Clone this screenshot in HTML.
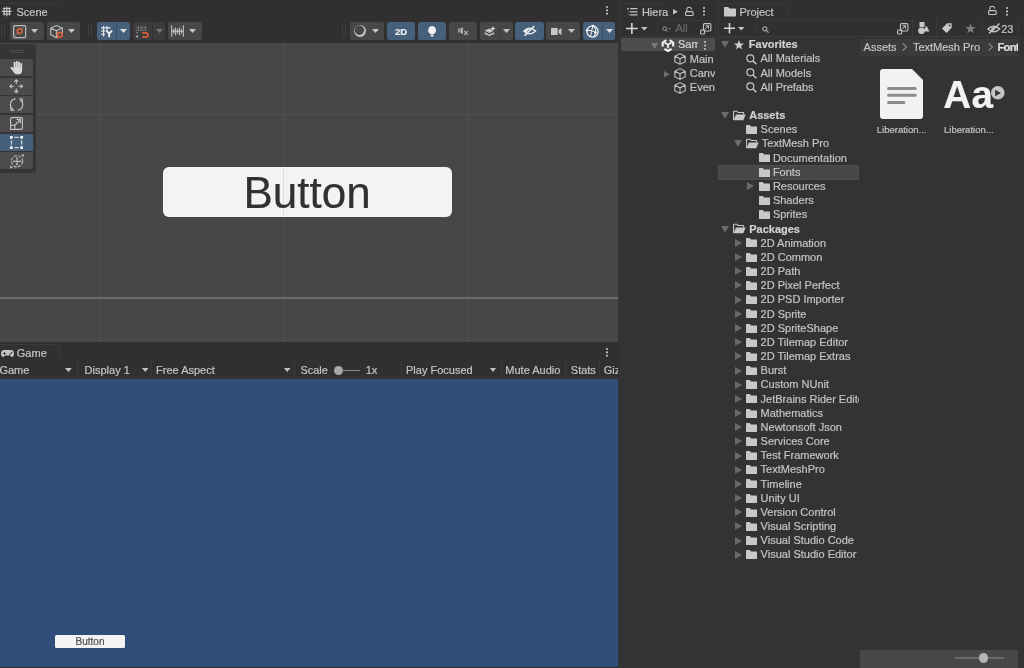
<!DOCTYPE html>
<html><head><meta charset="utf-8">
<style>
*{margin:0;padding:0;box-sizing:border-box}
html,body{width:1024px;height:668px;overflow:hidden;background:#303030;font-family:"Liberation Sans",sans-serif;font-size:11px;color:#c4c4c4}
.a{position:absolute}
.t{position:absolute;white-space:nowrap;-webkit-text-stroke:0.2px currentColor}
svg{position:absolute;overflow:visible}
</style></head><body><div id="root" style="position:absolute;left:0;top:0;width:1024px;height:668px;will-change:transform">

<div class="a" style="left:0px;top:3px;width:61.3px;height:1px;background:#3a3a3a;"></div>
<svg style="left:0px;top:4px;" width="14" height="14" viewBox="0 0 14 14"><path d="M4.2 3.2V11.6M6.8 2.5V12.2M9.4 3.2V11.6M2.8 4.5H10.8M1.9 7.3H11.7M2.8 10H10.8" stroke="#c8c8c8" stroke-width="1.15"/></svg>
<div class="t" style="left:16.5px;top:6.699999999999999px;font-size:11px;line-height:11px;color:#c4c4c4;">Scene</div>
<svg style="left:604.5px;top:5px;" width="4" height="10.8" viewBox="0 0 4 10.8"><circle cx="2" cy="2.0" r="1.05" fill="#c4c4c4"/><circle cx="2" cy="5.4" r="1.05" fill="#c4c4c4"/><circle cx="2" cy="8.8" r="1.05" fill="#c4c4c4"/></svg>
<div class="a" style="left:1.2px;top:24px;width:1px;height:14px;background:#3f3f3f;"></div>
<div class="a" style="left:3.9000000000000004px;top:24px;width:1px;height:14px;background:#3f3f3f;"></div>
<div class="a" style="left:10.2px;top:22.2px;width:33.5px;height:17.8px;background:#474747;border-radius:2.5px"></div>
<svg style="left:13.1px;top:24.8px;" width="13.5" height="13.5" viewBox="0 0 13.5 13.5"><rect x="0.65" y="0.65" width="12" height="12" rx="1.3" fill="none" stroke="#bcbcbc" stroke-width="1.25"/><path d="M2.3 10.8L11 2.2" stroke="#a0a0a0" stroke-width="1" stroke-dasharray="1.6 0.9"/><circle cx="6.6" cy="6.1" r="2.35" fill="#474747" stroke="#e0643a" stroke-width="1.5"/></svg>
<svg style="left:31.0px;top:29.3px;" width="7" height="4" viewBox="0 0 7 4"><path d="M0 0H7L3.5 4Z" fill="#c4c4c4"/></svg>
<div class="a" style="left:46.7px;top:22.2px;width:33.5px;height:17.8px;background:#474747;border-radius:2.5px"></div>
<svg style="left:49.8px;top:24.7px;" width="13.5" height="13.5" viewBox="0 0 13.5 13.5"><path d="M6.4 0.6L12.4 2.9V9.6L6.4 12.7L0.7 9.6V3.2Z M0.7 3.2L6.4 5.8L12.4 2.9 M6.4 5.8V12.7" fill="none" stroke="#bcbcbc" stroke-width="1.1" stroke-linejoin="round"/><circle cx="9.8" cy="9.8" r="2.4" fill="#474747" stroke="#e0643a" stroke-width="1.6"/></svg>
<svg style="left:67.8px;top:29.3px;" width="7" height="4" viewBox="0 0 7 4"><path d="M0 0H7L3.5 4Z" fill="#c4c4c4"/></svg>
<div class="a" style="left:88.4px;top:24px;width:1px;height:14px;background:#3f3f3f;"></div>
<div class="a" style="left:91.10000000000001px;top:24px;width:1px;height:14px;background:#3f3f3f;"></div>
<div class="a" style="left:97px;top:22.2px;width:32.6px;height:17.8px;background:#46607c;border-radius:2.5px"></div>
<div class="a" style="left:116.2px;top:22.2px;width:1.2px;height:17.8px;background:#3a4e66;"></div>
<svg style="left:100.9px;top:25.9px;" width="12" height="11.5" viewBox="0 0 12 11.5"><path d="M2.6 0V10.5M5.9 0V4.5M0 1.9H9.5M0 5H4.5M0 8.2H4" stroke="#e8e8e8" stroke-width="1.15"/><path d="M5.4 4.6L8.2 7.6L11 4.6M8.2 7.4V11.3" fill="none" stroke="#f4f4f4" stroke-width="1.8"/></svg>
<svg style="left:120.0px;top:29.3px;" width="7" height="4" viewBox="0 0 7 4"><path d="M0 0H7L3.5 4Z" fill="#e0e0e0"/></svg>
<div class="a" style="left:132.6px;top:22.2px;width:32.9px;height:17.8px;background:#3c3c3c;border-radius:2.5px"></div>
<div class="a" style="left:152.1px;top:22.2px;width:1px;height:17.8px;background:#333333;"></div>
<svg style="left:136.2px;top:25.9px;" width="13" height="11.5" viewBox="0 0 13 11.5"><path d="M2.6 0V4.5M6 0V4.5M9.2 0V4.5M0.2 1.8H11M0.2 4.4H11" stroke="#8e8e8e" stroke-width="0.9" stroke-dasharray="1.1 0.7"/><circle cx="1.2" cy="6.5" r="0.8" fill="#9a9a9a"/><circle cx="1.2" cy="10.5" r="0.9" fill="#d8d8d8"/><path d="M6.2 6.9H10A2 2 0 0 1 10 10.9H6.2" fill="none" stroke="#d4603a" stroke-width="1.7"/></svg>
<svg style="left:155.5px;top:29.3px;" width="7" height="4" viewBox="0 0 7 4"><path d="M0 0H7L3.5 4Z" fill="#7a7a7a"/></svg>
<div class="a" style="left:168.3px;top:22.2px;width:33.4px;height:17.8px;background:#474747;border-radius:2.5px"></div>
<svg style="left:170.7px;top:24.8px;" width="13" height="12" viewBox="0 0 13 12"><path d="M0.7 0.3V11.8M12.3 0.3V11.8M2.7 4V8.8M4.6 2.5V10.3M6.5 3.8V8.8M8.4 2.5V10.3M10.3 4V8.8M0.7 6.2H12.3" stroke="#c8c8c8" stroke-width="1.05"/></svg>
<svg style="left:189.3px;top:29.3px;" width="7" height="4" viewBox="0 0 7 4"><path d="M0 0H7L3.5 4Z" fill="#c4c4c4"/></svg>
<div class="a" style="left:342px;top:24px;width:1px;height:14px;background:#3f3f3f;"></div>
<div class="a" style="left:344.7px;top:24px;width:1px;height:14px;background:#3f3f3f;"></div>
<div class="a" style="left:350.3px;top:22.2px;width:33.5px;height:17.8px;background:#474747;border-radius:2.5px"></div>
<svg style="left:353.9px;top:25.3px;" width="12.5" height="12" viewBox="0 0 12.5 12"><path fill-rule="evenodd" d="M0.2 6A5.9 5.9 0 1 0 12 6A5.9 5.9 0 1 0 0.2 6Z M0.8 5.3A4.7 4.7 0 1 0 10.2 5.3A4.7 4.7 0 1 0 0.8 5.3Z" fill="#c4c4c4"/></svg>
<svg style="left:371.8px;top:29.3px;" width="7" height="4" viewBox="0 0 7 4"><path d="M0 0H7L3.5 4Z" fill="#c4c4c4"/></svg>
<div class="a" style="left:387.2px;top:22.2px;width:27.7px;height:17.8px;background:#46607c;border-radius:2.5px"></div>
<div class="t" style="left:387.2px;top:27.4px;width:27.7px;text-align:center;font-size:9.5px;line-height:10px;font-weight:bold;color:#eaeaea">2D</div>
<div class="a" style="left:418.2px;top:22.2px;width:27.8px;height:17.8px;background:#46607c;border-radius:2.5px"></div>
<svg style="left:427.9px;top:25.9px;" width="8.2" height="10.5" viewBox="0 0 8.2 10.5"><path d="M4.1 0A4.1 4.1 0 0 1 6.4 7.4L5.7 8.3H2.5L1.8 7.4A4.1 4.1 0 0 1 4.1 0Z" fill="#f2f2f2"/><rect x="2.6" y="8.8" width="3" height="1.6" rx="0.6" fill="#f2f2f2"/></svg>
<div class="a" style="left:449.4px;top:22.2px;width:27.7px;height:17.8px;background:#474747;border-radius:2.5px"></div>
<svg style="left:457.6px;top:27.2px;" width="11" height="8.5" viewBox="0 0 11 8.5"><path d="M0.2 1.6H1.5V5.6H0.2Z" fill="#bcbcbc"/><path d="M2.4 1.7L4.8 0V7.3L2.4 5.5Z" fill="#bcbcbc"/><path d="M6.2 3.8L9.8 7.9M9.8 3.8L6.2 7.9" stroke="#bcbcbc" stroke-width="1.05"/></svg>
<div class="a" style="left:480px;top:22.2px;width:32.8px;height:17.8px;background:#474747;border-radius:2.5px"></div>
<div class="a" style="left:499.2px;top:22.2px;width:1px;height:17.8px;background:#3c3c3c;"></div>
<svg style="left:483.6px;top:25.9px;" width="12" height="10" viewBox="0 0 12 10"><path d="M0.6 7L5.3 9.3L10.2 7" fill="none" stroke="#c8c8c8" stroke-width="1.4"/><path d="M0.6 4.6L5.3 6.9L9.6 4.8L5.3 2.4Z" fill="#c8c8c8"/><path d="M8.9 0L9.6 1.8L11.6 2.5L9.6 3.2L8.9 5L8.2 3.2L6.3 2.5L8.2 1.8Z" fill="#e4e4e4"/></svg>
<svg style="left:502.8px;top:29.3px;" width="7" height="4" viewBox="0 0 7 4"><path d="M0 0H7L3.5 4Z" fill="#c4c4c4"/></svg>
<div class="a" style="left:515.4px;top:22.2px;width:28.4px;height:17.8px;background:#46607c;border-radius:2.5px"></div>
<svg style="left:522.7px;top:25.9px;" width="13.5" height="10" viewBox="0 0 13.5 10"><path d="M0.7 5.1Q6.6 -0.5 12.6 5.1Q6.6 10.7 0.7 5.1Z" fill="none" stroke="#ececec" stroke-width="1.3"/><path d="M1.6 9.6L11.2 0.1" stroke="#ececec" stroke-width="1.6"/><path d="M0.7 5.1Q3.5 2.3 6.8 2.2L2.8 7Q1.5 6.2 0.7 5.1Z" fill="#ececec"/></svg>
<div class="a" style="left:546.3px;top:22.2px;width:33.5px;height:17.8px;background:#474747;border-radius:2.5px"></div>
<svg style="left:551px;top:27.8px;" width="11" height="7" viewBox="0 0 11 7"><rect x="0" y="0" width="6.6" height="7" fill="#c8c8c8"/><path d="M7.6 2L10.5 0V7L7.6 5Z" fill="#c8c8c8"/></svg>
<svg style="left:568.0px;top:29.3px;" width="7" height="4" viewBox="0 0 7 4"><path d="M0 0H7L3.5 4Z" fill="#c4c4c4"/></svg>
<div class="a" style="left:583.2px;top:22.2px;width:32.0px;height:17.8px;background:#46607c;border-radius:2.5px"></div>
<div class="a" style="left:602.3px;top:22.2px;width:1px;height:17.8px;background:#3a4e66;"></div>
<svg style="left:586px;top:25.1px;" width="13" height="13" viewBox="0 0 13 13"><circle cx="6.5" cy="6.5" r="5.6" fill="none" stroke="#f0f0f0" stroke-width="1.3"/><path d="M1 5.3Q5 4.8 9.5 7.4M7 0.8Q5.3 6 4.6 12M7 0.8Q10.8 4 9.6 7.4L8 12.3" fill="none" stroke="#f0f0f0" stroke-width="1"/><circle cx="7" cy="0.9" r="1.2" fill="#fff"/><circle cx="1" cy="5.3" r="1.2" fill="#fff"/><circle cx="9.5" cy="7.4" r="1.2" fill="#fff"/></svg>
<svg style="left:605.8px;top:29.3px;" width="7" height="4" viewBox="0 0 7 4"><path d="M0 0H7L3.5 4Z" fill="#e0e0e0"/></svg>
<div class="a" style="left:0;top:42.8px;width:618px;height:299.2px;background:#474747;overflow:hidden">
<div class="a" style="left:99.5px;top:0px;width:1px;height:300px;background:#515151;"></div>
<div class="a" style="left:283.5px;top:0px;width:1px;height:300px;background:#515151;"></div>
<div class="a" style="left:467.5px;top:0px;width:1px;height:300px;background:#515151;"></div>
<div class="a" style="left:0px;top:71.2px;width:618px;height:1px;background:#515151;"></div>
<div class="a" style="left:162.5px;top:124.2px;width:289px;height:50px;background:#f3f3f3;border-radius:6px"></div>
<div class="a" style="left:283.1px;top:124.2px;width:1px;height:50px;background:#dedede;"></div>
<div class="t" style="left:243.5px;top:128.5px;font-size:44px;line-height:44px;color:#313131">Button</div>
<div class="a" style="left:0px;top:254.3px;width:618px;height:1.8px;background:#6b6b6b;"></div>
<div class="a" style="left:0;top:1.4px;width:35.6px;height:128.8px;background:#353535;border-radius:0 4px 4px 0"></div>
<div class="a" style="left:9.9px;top:7.0px;width:14px;height:1px;background:#4a4a4a;"></div>
<div class="a" style="left:9.9px;top:9.300000000000004px;width:14px;height:1px;background:#4a4a4a;"></div>
<div class="a" style="left:0px;top:16.2px;width:33px;height:16.7px;background:#4b4b4b;border-radius:0 3px 0 0"></div>
<div class="a" style="left:0px;top:35.0px;width:33px;height:17.2px;background:#4b4b4b;"></div>
<div class="a" style="left:0px;top:53.4px;width:33px;height:17.2px;background:#4b4b4b;"></div>
<div class="a" style="left:0px;top:72.3px;width:33px;height:17.2px;background:#4b4b4b;"></div>
<div class="a" style="left:0px;top:91.0px;width:33px;height:17.0px;background:#46607c;"></div>
<div class="a" style="left:0px;top:109.4px;width:33px;height:17.2px;background:#4b4b4b;border-radius:0 0 3px 0"></div>
</div>
<svg style="left:9.85px;top:60.5px;" width="14" height="13.5" viewBox="0 0 14 13.5"><path d="M4.6 7V1.6M6.8 7V0.9M9 7V1.4M11.2 7.5V3" stroke="#d8d8d8" stroke-width="1.9" stroke-linecap="round"/><path d="M3.7 6.2H12.1V9.2Q12 13 8.8 13.2H6.7Q5.2 13.2 4.3 12L0.6 7.3Q0.1 6.4 0.9 5.9Q1.7 5.5 2.4 6.2L3.7 7.6Z" fill="#d8d8d8"/></svg>
<svg style="left:9.4px;top:79px;" width="14.5" height="14.5" viewBox="0 0 14.5 14.5"><path d="M7.25 1V5.2M7.25 9.3V13.5M1 7.25H5.2M9.3 7.25H13.5" stroke="#c4c4c4" stroke-width="1.1"/><path d="M5.3 2.9L7.25 0.9L9.2 2.9M5.3 11.6L7.25 13.6L9.2 11.6M2.9 5.3L0.9 7.25L2.9 9.2M11.6 5.3L13.6 7.25L11.6 9.2" fill="none" stroke="#c4c4c4" stroke-width="1.1"/></svg>
<svg style="left:9.85px;top:98.3px;" width="13.2" height="13.2" viewBox="0 0 13.2 13.2"><path d="M5.6 0.9A5.6 5.6 0 0 0 3.2 11.3M7.6 12.3A5.6 5.6 0 0 0 10 1.9" fill="none" stroke="#c4c4c4" stroke-width="1.15"/><path d="M0.6 9.3L1.1 12.4L4.3 12.2M12.6 3.9L12.1 0.8L8.9 1" fill="none" stroke="#c4c4c4" stroke-width="1.15"/></svg>
<svg style="left:10.1px;top:117.3px;" width="13" height="13" viewBox="0 0 13 13"><rect x="0.6" y="0.6" width="11.8" height="11.8" rx="1.4" fill="none" stroke="#c4c4c4" stroke-width="1.15"/><rect x="0.6" y="8.3" width="4.2" height="4.1" fill="#474747" stroke="#c4c4c4" stroke-width="1.15"/><path d="M5 8L10 3M6.6 2.5H10.4V6.3" fill="none" stroke="#c4c4c4" stroke-width="1.15"/></svg>
<svg style="left:10.1px;top:135.7px;" width="13" height="13" viewBox="0 0 13 13"><path d="M4.3 1.3H8.7M4.3 11.7H8.7M1.3 4.3V8.7M11.7 4.3V8.7" stroke="#e8e8e8" stroke-width="1"/><rect x="0" y="0" width="2.7" height="2.7" fill="#f2f2f2"/><rect x="10.3" y="0" width="2.7" height="2.7" fill="#f2f2f2"/><rect x="0" y="10.3" width="2.7" height="2.7" fill="#f2f2f2"/><rect x="10.3" y="10.3" width="2.7" height="2.7" fill="#f2f2f2"/></svg>
<svg style="left:9.6px;top:153.6px;" width="14.5" height="14.5" viewBox="0 0 14.5 14.5"><circle cx="7" cy="7.3" r="5.6" fill="none" stroke="#c4c4c4" stroke-width="1.05" stroke-dasharray="3.2 1.3"/><path d="M7 3.8V10.8M3.5 7.3H10.5" stroke="#c4c4c4" stroke-width="1"/><path d="M7 3L5.6 4.6H8.4ZM7 11.6L5.6 10H8.4ZM2.7 7.3L4.3 5.9V8.7ZM11.3 7.3L9.7 5.9V8.7Z" fill="#c4c4c4"/><path d="M14 0.2L11 0.8L13.4 3.2ZM0 14.4L3 13.8L0.6 11.4Z" fill="#c4c4c4"/></svg>
<div class="a" style="left:0;top:342px;width:618px;height:326px;overflow:hidden">
<div class="a" style="left:0px;top:1.7px;width:59px;height:1px;background:#3a3a3a;"></div>
<div class="a" style="left:58.5px;top:3px;width:1px;height:16px;background:#3a3a3a;"></div>
</div>
<svg style="left:1px;top:349.5px;" width="13" height="7" viewBox="0 0 13 7"><path d="M3 0H10Q13 0 13 3.5Q13 7 10.5 7L9 5.5H4L2.5 7Q0 7 0 3.5Q0 0 3 0Z" fill="#c4c4c4"/><path d="M2.2 3.5H4.8M3.5 2.2V4.8" stroke="#2b2b2b" stroke-width="0.9"/><circle cx="9" cy="4.3" r="0.8" fill="#2b2b2b"/><circle cx="10.5" cy="2.8" r="0.8" fill="#2b2b2b"/></svg>
<div class="t" style="left:16.8px;top:347.9px;font-size:11px;line-height:11px;color:#c4c4c4;">Game</div>
<svg style="left:604.5px;top:347px;" width="4" height="10.8" viewBox="0 0 4 10.8"><circle cx="2" cy="2.0" r="1.05" fill="#c4c4c4"/><circle cx="2" cy="5.4" r="1.05" fill="#c4c4c4"/><circle cx="2" cy="8.8" r="1.05" fill="#c4c4c4"/></svg>
<div class="t" style="left:-0.6px;top:364.6px;font-size:11px;line-height:11px;color:#c4c4c4;">Game</div>
<svg style="left:65.0px;top:368.0px;" width="6.8" height="4" viewBox="0 0 6.8 4"><path d="M0 0H6.8L3.4 4Z" fill="#c4c4c4"/></svg>
<div class="a" style="left:77.1px;top:361px;width:1px;height:16.5px;background:#3a3a3a;"></div>
<div class="t" style="left:84.6px;top:364.6px;font-size:11px;line-height:11px;color:#c4c4c4;">Display 1</div>
<svg style="left:141.6px;top:368.0px;" width="6.5" height="4" viewBox="0 0 6.5 4"><path d="M0 0H6.5L3.25 4Z" fill="#c4c4c4"/></svg>
<div class="a" style="left:150.9px;top:361px;width:1px;height:16.5px;background:#3a3a3a;"></div>
<div class="t" style="left:156.1px;top:364.6px;font-size:11px;line-height:11px;color:#c4c4c4;">Free Aspect</div>
<svg style="left:283.75px;top:368.0px;" width="6.5" height="4" viewBox="0 0 6.5 4"><path d="M0 0H6.5L3.25 4Z" fill="#c4c4c4"/></svg>
<div class="a" style="left:294.1px;top:361px;width:1px;height:16.5px;background:#3a3a3a;"></div>
<div class="t" style="left:300.4px;top:364.6px;font-size:11px;line-height:11px;color:#c4c4c4;">Scale</div>
<div class="a" style="left:338px;top:369.9px;width:22.2px;height:1.4px;background:#8a8a8a;"></div>
<div class="a" style="left:333.5px;top:366.1px;width:9px;height:9px;border-radius:50%;background:#a9a9a9"></div>
<div class="t" style="left:365.7px;top:364.6px;font-size:11px;line-height:11px;color:#c4c4c4;">1x</div>
<div class="a" style="left:401.0px;top:361px;width:1px;height:16.5px;background:#3a3a3a;"></div>
<div class="t" style="left:406px;top:364.6px;font-size:11px;line-height:11px;color:#c4c4c4;">Play Focused</div>
<svg style="left:489.7px;top:368.0px;" width="6" height="4" viewBox="0 0 6 4"><path d="M0 0H6L3.0 4Z" fill="#c4c4c4"/></svg>
<div class="a" style="left:500.5px;top:361px;width:1px;height:16.5px;background:#3a3a3a;"></div>
<div class="t" style="left:505.3px;top:364.6px;font-size:11px;line-height:11px;color:#c4c4c4;">Mute Audio</div>
<div class="a" style="left:564.9px;top:361px;width:1px;height:16.5px;background:#3a3a3a;"></div>
<div class="t" style="left:570.8px;top:364.6px;font-size:11px;line-height:11px;color:#c4c4c4;">Stats</div>
<div class="a" style="left:599.3px;top:361px;width:1px;height:16.5px;background:#3a3a3a;"></div>
<div class="a" style="left:603.7px;top:362px;width:14.3px;height:14px;overflow:hidden">
<div class="t" style="left:0px;top:2.6000000000000227px;font-size:11px;line-height:11px;color:#c4c4c4;">Gizmos</div>
</div>
<div class="a" style="left:0px;top:377.2px;width:618px;height:1px;background:#383838;"></div>
<div class="a" style="left:0px;top:378.5px;width:618px;height:288px;background:#314d79;"></div>
<div class="a" style="left:55.1px;top:635px;width:69.9px;height:12.5px;background:#f3f3f3;border-radius:1.5px"></div>
<div class="t" style="left:55.1px;top:636.6px;width:69.9px;text-align:center;font-size:10px;line-height:10px;color:#505050">Button</div>
<div class="a" style="left:620.3px;top:3px;width:47px;height:1px;background:#3a3a3a;"></div>
<div class="a" style="left:620.3px;top:3px;width:1px;height:33.6px;background:#3a3a3a;"></div>
<div class="a" style="left:620.3px;top:36px;width:95.4px;height:1px;background:#3a3a3a;"></div>
<div class="a" style="left:715px;top:20px;width:1px;height:16.5px;background:#3a3a3a;"></div>
<svg style="left:627.2px;top:7.6px;" width="10.5" height="8" viewBox="0 0 10.5 8"><path d="M3.2 0.7H10.5M3.2 3.8H10.5M3.2 6.9H10.5" stroke="#c4c4c4" stroke-width="1.2"/><circle cx="1" cy="0.7" r="0.9" fill="#c4c4c4"/><path d="M1.6 3.8H2.4M1.6 6.9H2.4" stroke="#c4c4c4" stroke-width="1"/></svg>
<div class="t" style="left:641.9px;top:6.699999999999999px;font-size:11px;line-height:11px;color:#c4c4c4;">Hiera</div>
<svg style="left:672.9px;top:9.1px;" width="5" height="6" viewBox="0 0 5 6"><path d="M0 0L4.8 2.8L0 5.6Z" fill="#c4c4c4"/></svg>
<svg style="left:685px;top:6.6px;" width="9" height="9" viewBox="0 0 9 9"><path d="M1.8 4.3V2.6A2.4 2.4 0 0 1 6.6 2.6" fill="none" stroke="#c4c4c4" stroke-width="1.1"/><rect x="0.55" y="4.6" width="7.6" height="3.9" rx="1" fill="none" stroke="#c4c4c4" stroke-width="1.1"/></svg>
<svg style="left:702.4px;top:5.6px;" width="4" height="10.8" viewBox="0 0 4 10.8"><circle cx="2" cy="2.0" r="1.05" fill="#c4c4c4"/><circle cx="2" cy="5.4" r="1.05" fill="#c4c4c4"/><circle cx="2" cy="8.8" r="1.05" fill="#c4c4c4"/></svg>
<svg style="left:625.6px;top:22.9px;" width="12" height="12" viewBox="0 0 12 12"><path d="M5.85 0V11.1M0 5.55H11.7" stroke="#d4d4d4" stroke-width="1.6"/></svg>
<svg style="left:640.9000000000001px;top:26.9px;" width="6.6" height="3.6" viewBox="0 0 6.6 3.6"><path d="M0 0H6.6L3.3 3.6Z" fill="#c4c4c4"/></svg>
<div class="a" style="left:657.1px;top:22px;width:1px;height:13px;background:#3a3a3a;"></div>
<div class="a" style="left:660px;top:19.8px;width:52.5px;height:1px;background:#3a3a3a;"></div>
<svg style="left:662.2px;top:25.9px;" width="9" height="6" viewBox="0 0 9 6"><circle cx="2.6" cy="2.6" r="1.9" fill="none" stroke="#9a9a9a" stroke-width="1"/><path d="M4 4L5.6 5.6M6.6 2.6H8.4" stroke="#9a9a9a" stroke-width="1"/></svg>
<div class="t" style="left:675.4px;top:23.0px;font-size:11px;line-height:11px;color:#6a6a6a;">All</div>
<svg style="left:699.8px;top:22.9px;" width="11.5" height="11.5" viewBox="0 0 11.5 11.5"><rect x="3.5" y="0.6" width="7.4" height="7.4" rx="1.2" fill="none" stroke="#c4c4c4" stroke-width="1.1"/><rect x="0.6" y="7" width="4" height="4" rx="0.8" fill="none" stroke="#c4c4c4" stroke-width="1.1"/><path d="M4.6 6.5L8.3 2.9M5.6 2.8H8.5V5.7" fill="none" stroke="#c4c4c4" stroke-width="1"/></svg>
<div class="a" style="left:618px;top:37px;width:100px;height:631px;background:#333333;"></div>
<div class="a" style="left:620.6px;top:38.1px;width:94.4px;height:13.2px;background:#4d4d4d;"></div>
<svg style="left:650.5px;top:42.7px;" width="7.2" height="6.1" viewBox="0 0 7.2 6.1"><path d="M0 0H7.2L3.6 6.1Z" fill="#7a7a7a"/></svg>
<svg style="left:660px;top:38px;" width="16" height="15" viewBox="0 0 16 15"><path d="M2.7 8.4V4.5L6.3 2.1M13.2 8.4V4.5L9.6 2.1M4.4 10.8L8 13L11.6 10.8" fill="none" stroke="#f2f2f2" stroke-width="2.1" stroke-linejoin="round"/><path d="M4.5 4.5L8 6.8L11.5 4.5M8 6.6V10.3" fill="none" stroke="#f2f2f2" stroke-width="1.7"/></svg>
<div class="a" style="left:678px;top:38px;width:19.5px;height:14px;overflow:hidden">
<div class="t" style="left:0px;top:1.2000000000000028px;font-size:11px;line-height:11px;color:#d6d6d6;">SampleScene</div>
</div>
<svg style="left:702.9px;top:39.6px;" width="4" height="11.0" viewBox="0 0 4 11.0"><circle cx="2" cy="2.0" r="1.05" fill="#c4c4c4"/><circle cx="2" cy="5.5" r="1.05" fill="#c4c4c4"/><circle cx="2" cy="9.0" r="1.05" fill="#c4c4c4"/></svg>
<svg style="left:674px;top:53.47px;" width="12" height="12" viewBox="0 0 12 12"><path d="M6 0.6L11.2 3.2V8.8L6 11.4L0.8 8.8V3.2Z M0.8 3.2L6 5.8L11.2 3.2 M6 5.8V11.4" fill="none" stroke="#c4c4c4" stroke-width="1.05" stroke-linejoin="round"/></svg>
<div class="a" style="left:689.8px;top:51.67px;width:25.5px;height:14px;overflow:hidden">
<div class="t" style="left:0px;top:2.0px;font-size:11px;line-height:11px;color:#c4c4c4;">Main Camera</div>
</div>
<svg style="left:674px;top:67.64px;" width="12" height="12" viewBox="0 0 12 12"><path d="M6 0.6L11.2 3.2V8.8L6 11.4L0.8 8.8V3.2Z M0.8 3.2L6 5.8L11.2 3.2 M6 5.8V11.4" fill="none" stroke="#c4c4c4" stroke-width="1.05" stroke-linejoin="round"/></svg>
<div class="a" style="left:689.8px;top:65.84px;width:25.5px;height:14px;overflow:hidden">
<div class="t" style="left:0px;top:2.0px;font-size:11px;line-height:11px;color:#c4c4c4;">Canvas</div>
</div>
<svg style="left:674px;top:81.80999999999999px;" width="12" height="12" viewBox="0 0 12 12"><path d="M6 0.6L11.2 3.2V8.8L6 11.4L0.8 8.8V3.2Z M0.8 3.2L6 5.8L11.2 3.2 M6 5.8V11.4" fill="none" stroke="#c4c4c4" stroke-width="1.05" stroke-linejoin="round"/></svg>
<div class="a" style="left:689.8px;top:80.00999999999999px;width:25.5px;height:14px;overflow:hidden">
<div class="t" style="left:0px;top:2.0px;font-size:11px;line-height:11px;color:#c4c4c4;">EventSystem</div>
</div>
<svg style="left:663.5px;top:70.8px;" width="6.5" height="7" viewBox="0 0 6.5 7"><path d="M0 0L5.8 3.2L0 6.4Z" fill="#6e6e6e"/></svg>
<div class="a" style="left:718.3px;top:3px;width:70px;height:1px;background:#3a3a3a;"></div>
<div class="a" style="left:718.3px;top:3px;width:1px;height:33.6px;background:#3a3a3a;"></div>
<div class="a" style="left:788px;top:5px;width:1px;height:13.5px;background:#3a3a3a;"></div>
<div class="a" style="left:718.3px;top:36px;width:300px;height:1px;background:#3a3a3a;"></div>
<svg style="left:724px;top:7.3px;" width="12" height="9.5" viewBox="0 0 12 9.5"><path d="M0 0.8Q0 0 0.8 0H4.2L5.5 1.5H11.2Q12 1.5 12 2.3V8.7Q12 9.5 11.2 9.5H0.8Q0 9.5 0 8.7Z" fill="#c8c8c8"/></svg>
<div class="t" style="left:739.4px;top:6.6px;font-size:11px;line-height:11px;color:#c4c4c4;">Project</div>
<svg style="left:987.9px;top:6.3px;" width="9" height="9" viewBox="0 0 9 9"><path d="M1.8 4.3V2.6A2.4 2.4 0 0 1 6.6 2.6" fill="none" stroke="#c4c4c4" stroke-width="1.1"/><rect x="0.55" y="4.6" width="7.6" height="3.9" rx="1" fill="none" stroke="#c4c4c4" stroke-width="1.1"/></svg>
<svg style="left:1005px;top:5.6px;" width="4" height="10.8" viewBox="0 0 4 10.8"><circle cx="2" cy="2.0" r="1.05" fill="#c4c4c4"/><circle cx="2" cy="5.4" r="1.05" fill="#c4c4c4"/><circle cx="2" cy="8.8" r="1.05" fill="#c4c4c4"/></svg>
<svg style="left:723.75px;top:23.4px;" width="11" height="11" viewBox="0 0 11 11"><path d="M5.5 0V10.4M0 5.2H11" stroke="#d4d4d4" stroke-width="1.6"/></svg>
<svg style="left:738.2px;top:26.8px;" width="6.6" height="3.6" viewBox="0 0 6.6 3.6"><path d="M0 0H6.6L3.3 3.6Z" fill="#c4c4c4"/></svg>
<div class="a" style="left:756.1px;top:22px;width:1px;height:13px;background:#3a3a3a;"></div>
<div class="a" style="left:759.8px;top:19.7px;width:152.5px;height:1px;background:#3a3a3a;"></div>
<svg style="left:761.5px;top:25.8px;" width="8" height="7" viewBox="0 0 8 7"><circle cx="2.8" cy="2.8" r="2.1" fill="none" stroke="#a8a8a8" stroke-width="1.1"/><path d="M4.4 4.4L6.6 6.6" stroke="#a8a8a8" stroke-width="1.3"/></svg>
<svg style="left:896.7px;top:22.6px;" width="11.5" height="11.5" viewBox="0 0 11.5 11.5"><rect x="3.5" y="0.6" width="7.4" height="7.4" rx="1.2" fill="none" stroke="#c4c4c4" stroke-width="1.1"/><rect x="0.6" y="7" width="4" height="4" rx="0.8" fill="none" stroke="#c4c4c4" stroke-width="1.1"/><path d="M4.6 6.5L8.3 2.9M5.6 2.8H8.5V5.7" fill="none" stroke="#c4c4c4" stroke-width="1"/></svg>
<div class="a" style="left:912.4px;top:20.2px;width:1px;height:16px;background:#3a3a3a;"></div>
<svg style="left:918px;top:21.8px;" width="12" height="12" viewBox="0 0 12 12"><rect x="1.5" y="0" width="5" height="5" fill="#c8c8c8"/><circle cx="3.5" cy="8.7" r="3.3" fill="#c8c8c8"/><path d="M8.2 3.5L11.6 9.5H5.5Z" fill="#c8c8c8"/></svg>
<div class="a" style="left:936.2px;top:20.2px;width:1px;height:16px;background:#3a3a3a;"></div>
<svg style="left:941.8px;top:23px;" width="10" height="10" viewBox="0 0 10 10"><path d="M5.2 0.3H9.7V4.8L4.5 10L0 5.5Z" fill="#c8c8c8"/><circle cx="7.6" cy="2.4" r="0.9" fill="#282828"/></svg>
<svg style="left:964.7px;top:22.6px;" width="11" height="11" viewBox="0 0 11 11"><path d="M5.5 0.3L6.9 4H10.8L7.6 6.4L8.8 10.3L5.5 7.9L2.2 10.3L3.4 6.4L0.2 4H4.1Z" fill="#7b7b7b"/></svg>
<div class="a" style="left:982.0px;top:20.2px;width:1px;height:16px;background:#3a3a3a;"></div>
<svg style="left:986.8px;top:22.8px;" width="14" height="11" viewBox="0 0 14 11"><path d="M0.8 6Q6.8 0.5 12.8 6Q6.8 11.5 0.8 6Z" fill="none" stroke="#c8c8c8" stroke-width="1.2"/><path d="M2 10.5L12.5 0.5" stroke="#c8c8c8" stroke-width="1.4"/><path d="M3.8 6Q6.8 3 9.5 4.3L5 8.2Q4 7 3.8 6Z" fill="#c8c8c8"/></svg>
<div class="t" style="left:1001.2px;top:23.799999999999997px;font-size:11px;line-height:11px;color:#c4c4c4;">23</div>
<div class="a" style="left:1017.5px;top:20.2px;width:1px;height:16px;background:#3a3a3a;"></div>
<div class="a" style="left:718px;top:37px;width:306px;height:631px;background:#333333;"></div>
<div class="a" style="left:1018px;top:37px;width:6px;height:631px;background:#333333;"></div>
<div class="a" style="left:717.9px;top:165.1px;width:140.7px;height:14.6px;background:#474747;border:1px solid #4f4f4f"></div>
<div class="a" style="left:718px;top:37px;width:140.5px;height:620px;overflow:hidden">
<svg style="left:3.0px;top:4.299999999999997px;" width="8" height="7" viewBox="0 0 8 7"><path d="M0 0H8L4 7Z" fill="#6a6a6a"/></svg>
<svg style="left:16px;top:2.6999999999999957px;" width="10" height="10" viewBox="0 0 10 10"><path d="M5 0L6.25 3.6H10L7 5.9L8.1 9.6L5 7.3L1.9 9.6L3 5.9L0 3.6H3.75Z" fill="#d0d0d0"/></svg>
<div class="t" style="left:30.8px;top:2.3000000000000007px;font-size:11px;line-height:11px;color:#d2d2d2;font-weight:bold;">Favorites</div>
<svg style="left:27.600000000000023px;top:16.869999999999997px;" width="11.5" height="11.5" viewBox="0 0 11.5 11.5"><circle cx="4.3" cy="4.3" r="3.5" fill="none" stroke="#c4c4c4" stroke-width="1.2"/><path d="M6.8 6.8L10.3 10.3" stroke="#c4c4c4" stroke-width="1.6"/></svg>
<div class="t" style="left:42.4px;top:16.47px;font-size:11px;line-height:11px;color:#c4c4c4;">All Materials</div>
<svg style="left:27.600000000000023px;top:31.040000000000006px;" width="11.5" height="11.5" viewBox="0 0 11.5 11.5"><circle cx="4.3" cy="4.3" r="3.5" fill="none" stroke="#c4c4c4" stroke-width="1.2"/><path d="M6.8 6.8L10.3 10.3" stroke="#c4c4c4" stroke-width="1.6"/></svg>
<div class="t" style="left:42.4px;top:30.64px;font-size:11px;line-height:11px;color:#c4c4c4;">All Models</div>
<svg style="left:27.600000000000023px;top:45.21000000000001px;" width="11.5" height="11.5" viewBox="0 0 11.5 11.5"><circle cx="4.3" cy="4.3" r="3.5" fill="none" stroke="#c4c4c4" stroke-width="1.2"/><path d="M6.8 6.8L10.3 10.3" stroke="#c4c4c4" stroke-width="1.6"/></svg>
<div class="t" style="left:42.4px;top:44.81px;font-size:11px;line-height:11px;color:#c4c4c4;">All Prefabs</div>
<svg style="left:3.0px;top:75.14999999999999px;" width="8" height="7" viewBox="0 0 8 7"><path d="M0 0H8L4 7Z" fill="#6a6a6a"/></svg>
<svg style="left:15.0px;top:73.74999999999999px;" width="13" height="9.5" viewBox="0 0 13 9.5"><path d="M0.6 9V0.6Q0.6 0.2 1 0.2H4L5.1 1.5H10.2Q10.6 1.5 10.6 1.9V3.4" fill="none" stroke="#c8c8c8" stroke-width="1.1"/><path d="M0.6 9.3L3 3.6H12.7L10.3 9.3Z" fill="#c8c8c8"/></svg>
<div class="t" style="left:31.2px;top:73.15px;font-size:11px;line-height:11px;color:#d2d2d2;font-weight:bold;">Assets</div>
<svg style="left:28.100000000000023px;top:88.11999999999999px;" width="11" height="9" viewBox="0 0 11 9"><path d="M0 0.6Q0 0 0.6 0H3.8L5 1.4H10.4Q11 1.4 11 2V8.4Q11 9 10.4 9H0.6Q0 9 0 8.4Z" fill="#c8c8c8"/></svg>
<div class="t" style="left:42.6px;top:87.32px;font-size:11px;line-height:11px;color:#c4c4c4;">Scenes</div>
<svg style="left:15.600000000000023px;top:103.49000000000001px;" width="8" height="7" viewBox="0 0 8 7"><path d="M0 0H8L4 7Z" fill="#6a6a6a"/></svg>
<svg style="left:27.600000000000023px;top:102.09px;" width="13" height="9.5" viewBox="0 0 13 9.5"><path d="M0.6 9V0.6Q0.6 0.2 1 0.2H4L5.1 1.5H10.2Q10.6 1.5 10.6 1.9V3.4" fill="none" stroke="#c8c8c8" stroke-width="1.1"/><path d="M0.6 9.3L3 3.6H12.7L10.3 9.3Z" fill="#c8c8c8"/></svg>
<div class="t" style="left:43.8px;top:101.49px;font-size:11px;line-height:11px;color:#c4c4c4;">TextMesh Pro</div>
<svg style="left:40.700000000000045px;top:116.46000000000001px;" width="11" height="9" viewBox="0 0 11 9"><path d="M0 0.6Q0 0 0.6 0H3.8L5 1.4H10.4Q11 1.4 11 2V8.4Q11 9 10.4 9H0.6Q0 9 0 8.4Z" fill="#c8c8c8"/></svg>
<div class="t" style="left:54.9px;top:115.66px;font-size:11px;line-height:11px;color:#c4c4c4;">Documentation</div>
<svg style="left:40.700000000000045px;top:130.63px;" width="11" height="9" viewBox="0 0 11 9"><path d="M0 0.6Q0 0 0.6 0H3.8L5 1.4H10.4Q11 1.4 11 2V8.4Q11 9 10.4 9H0.6Q0 9 0 8.4Z" fill="#c8c8c8"/></svg>
<div class="t" style="left:54.9px;top:129.83px;font-size:11px;line-height:11px;color:#c4c4c4;">Fonts</div>
<svg style="left:29.200000000000045px;top:145.3px;" width="7" height="8" viewBox="0 0 7 8"><path d="M0 0L7 4L0 8Z" fill="#6a6a6a"/></svg>
<svg style="left:40.700000000000045px;top:144.8px;" width="11" height="9" viewBox="0 0 11 9"><path d="M0 0.6Q0 0 0.6 0H3.8L5 1.4H10.4Q11 1.4 11 2V8.4Q11 9 10.4 9H0.6Q0 9 0 8.4Z" fill="#c8c8c8"/></svg>
<div class="t" style="left:54.9px;top:144.0px;font-size:11px;line-height:11px;color:#c4c4c4;">Resources</div>
<svg style="left:40.700000000000045px;top:158.97000000000003px;" width="11" height="9" viewBox="0 0 11 9"><path d="M0 0.6Q0 0 0.6 0H3.8L5 1.4H10.4Q11 1.4 11 2V8.4Q11 9 10.4 9H0.6Q0 9 0 8.4Z" fill="#c8c8c8"/></svg>
<div class="t" style="left:54.9px;top:158.17px;font-size:11px;line-height:11px;color:#c4c4c4;">Shaders</div>
<svg style="left:40.700000000000045px;top:173.14px;" width="11" height="9" viewBox="0 0 11 9"><path d="M0 0.6Q0 0 0.6 0H3.8L5 1.4H10.4Q11 1.4 11 2V8.4Q11 9 10.4 9H0.6Q0 9 0 8.4Z" fill="#c8c8c8"/></svg>
<div class="t" style="left:54.9px;top:172.34px;font-size:11px;line-height:11px;color:#c4c4c4;">Sprites</div>
<svg style="left:3.0px;top:188.51px;" width="8" height="7" viewBox="0 0 8 7"><path d="M0 0H8L4 7Z" fill="#6a6a6a"/></svg>
<svg style="left:15.0px;top:187.10999999999999px;" width="13" height="9.5" viewBox="0 0 13 9.5"><path d="M0.6 9V0.6Q0.6 0.2 1 0.2H4L5.1 1.5H10.2Q10.6 1.5 10.6 1.9V3.4" fill="none" stroke="#c8c8c8" stroke-width="1.1"/><path d="M0.6 9.3L3 3.6H12.7L10.3 9.3Z" fill="#c8c8c8"/></svg>
<div class="t" style="left:31.2px;top:186.51px;font-size:11px;line-height:11px;color:#d2d2d2;font-weight:bold;">Packages</div>
<svg style="left:16.600000000000023px;top:201.98000000000002px;" width="7" height="8" viewBox="0 0 7 8"><path d="M0 0L7 4L0 8Z" fill="#6a6a6a"/></svg>
<svg style="left:28.100000000000023px;top:201.48000000000002px;" width="11" height="9" viewBox="0 0 11 9"><path d="M0 0.6Q0 0 0.6 0H3.8L5 1.4H10.4Q11 1.4 11 2V8.4Q11 9 10.4 9H0.6Q0 9 0 8.4Z" fill="#c8c8c8"/></svg>
<div class="t" style="left:42.6px;top:200.68px;font-size:11px;line-height:11px;color:#c4c4c4;">2D Animation</div>
<svg style="left:16.600000000000023px;top:216.15000000000003px;" width="7" height="8" viewBox="0 0 7 8"><path d="M0 0L7 4L0 8Z" fill="#6a6a6a"/></svg>
<svg style="left:28.100000000000023px;top:215.65000000000003px;" width="11" height="9" viewBox="0 0 11 9"><path d="M0 0.6Q0 0 0.6 0H3.8L5 1.4H10.4Q11 1.4 11 2V8.4Q11 9 10.4 9H0.6Q0 9 0 8.4Z" fill="#c8c8c8"/></svg>
<div class="t" style="left:42.6px;top:214.85px;font-size:11px;line-height:11px;color:#c4c4c4;">2D Common</div>
<svg style="left:16.600000000000023px;top:230.32px;" width="7" height="8" viewBox="0 0 7 8"><path d="M0 0L7 4L0 8Z" fill="#6a6a6a"/></svg>
<svg style="left:28.100000000000023px;top:229.82px;" width="11" height="9" viewBox="0 0 11 9"><path d="M0 0.6Q0 0 0.6 0H3.8L5 1.4H10.4Q11 1.4 11 2V8.4Q11 9 10.4 9H0.6Q0 9 0 8.4Z" fill="#c8c8c8"/></svg>
<div class="t" style="left:42.6px;top:229.02px;font-size:11px;line-height:11px;color:#c4c4c4;">2D Path</div>
<svg style="left:16.600000000000023px;top:244.49px;" width="7" height="8" viewBox="0 0 7 8"><path d="M0 0L7 4L0 8Z" fill="#6a6a6a"/></svg>
<svg style="left:28.100000000000023px;top:243.99px;" width="11" height="9" viewBox="0 0 11 9"><path d="M0 0.6Q0 0 0.6 0H3.8L5 1.4H10.4Q11 1.4 11 2V8.4Q11 9 10.4 9H0.6Q0 9 0 8.4Z" fill="#c8c8c8"/></svg>
<div class="t" style="left:42.6px;top:243.19px;font-size:11px;line-height:11px;color:#c4c4c4;">2D Pixel Perfect</div>
<svg style="left:16.600000000000023px;top:258.66px;" width="7" height="8" viewBox="0 0 7 8"><path d="M0 0L7 4L0 8Z" fill="#6a6a6a"/></svg>
<svg style="left:28.100000000000023px;top:258.16px;" width="11" height="9" viewBox="0 0 11 9"><path d="M0 0.6Q0 0 0.6 0H3.8L5 1.4H10.4Q11 1.4 11 2V8.4Q11 9 10.4 9H0.6Q0 9 0 8.4Z" fill="#c8c8c8"/></svg>
<div class="t" style="left:42.6px;top:257.36px;font-size:11px;line-height:11px;color:#c4c4c4;">2D PSD Importer</div>
<svg style="left:16.600000000000023px;top:272.83000000000004px;" width="7" height="8" viewBox="0 0 7 8"><path d="M0 0L7 4L0 8Z" fill="#6a6a6a"/></svg>
<svg style="left:28.100000000000023px;top:272.33000000000004px;" width="11" height="9" viewBox="0 0 11 9"><path d="M0 0.6Q0 0 0.6 0H3.8L5 1.4H10.4Q11 1.4 11 2V8.4Q11 9 10.4 9H0.6Q0 9 0 8.4Z" fill="#c8c8c8"/></svg>
<div class="t" style="left:42.6px;top:271.53px;font-size:11px;line-height:11px;color:#c4c4c4;">2D Sprite</div>
<svg style="left:16.600000000000023px;top:287.0px;" width="7" height="8" viewBox="0 0 7 8"><path d="M0 0L7 4L0 8Z" fill="#6a6a6a"/></svg>
<svg style="left:28.100000000000023px;top:286.5px;" width="11" height="9" viewBox="0 0 11 9"><path d="M0 0.6Q0 0 0.6 0H3.8L5 1.4H10.4Q11 1.4 11 2V8.4Q11 9 10.4 9H0.6Q0 9 0 8.4Z" fill="#c8c8c8"/></svg>
<div class="t" style="left:42.6px;top:285.7px;font-size:11px;line-height:11px;color:#c4c4c4;">2D SpriteShape</div>
<svg style="left:16.600000000000023px;top:301.17px;" width="7" height="8" viewBox="0 0 7 8"><path d="M0 0L7 4L0 8Z" fill="#6a6a6a"/></svg>
<svg style="left:28.100000000000023px;top:300.67px;" width="11" height="9" viewBox="0 0 11 9"><path d="M0 0.6Q0 0 0.6 0H3.8L5 1.4H10.4Q11 1.4 11 2V8.4Q11 9 10.4 9H0.6Q0 9 0 8.4Z" fill="#c8c8c8"/></svg>
<div class="t" style="left:42.6px;top:299.87px;font-size:11px;line-height:11px;color:#c4c4c4;">2D Tilemap Editor</div>
<svg style="left:16.600000000000023px;top:315.34000000000003px;" width="7" height="8" viewBox="0 0 7 8"><path d="M0 0L7 4L0 8Z" fill="#6a6a6a"/></svg>
<svg style="left:28.100000000000023px;top:314.84000000000003px;" width="11" height="9" viewBox="0 0 11 9"><path d="M0 0.6Q0 0 0.6 0H3.8L5 1.4H10.4Q11 1.4 11 2V8.4Q11 9 10.4 9H0.6Q0 9 0 8.4Z" fill="#c8c8c8"/></svg>
<div class="t" style="left:42.6px;top:314.04px;font-size:11px;line-height:11px;color:#c4c4c4;">2D Tilemap Extras</div>
<svg style="left:16.600000000000023px;top:329.51000000000005px;" width="7" height="8" viewBox="0 0 7 8"><path d="M0 0L7 4L0 8Z" fill="#6a6a6a"/></svg>
<svg style="left:28.100000000000023px;top:329.01000000000005px;" width="11" height="9" viewBox="0 0 11 9"><path d="M0 0.6Q0 0 0.6 0H3.8L5 1.4H10.4Q11 1.4 11 2V8.4Q11 9 10.4 9H0.6Q0 9 0 8.4Z" fill="#c8c8c8"/></svg>
<div class="t" style="left:42.6px;top:328.21px;font-size:11px;line-height:11px;color:#c4c4c4;">Burst</div>
<svg style="left:16.600000000000023px;top:343.68px;" width="7" height="8" viewBox="0 0 7 8"><path d="M0 0L7 4L0 8Z" fill="#6a6a6a"/></svg>
<svg style="left:28.100000000000023px;top:343.18px;" width="11" height="9" viewBox="0 0 11 9"><path d="M0 0.6Q0 0 0.6 0H3.8L5 1.4H10.4Q11 1.4 11 2V8.4Q11 9 10.4 9H0.6Q0 9 0 8.4Z" fill="#c8c8c8"/></svg>
<div class="t" style="left:42.6px;top:342.38px;font-size:11px;line-height:11px;color:#c4c4c4;">Custom NUnit</div>
<svg style="left:16.600000000000023px;top:357.85px;" width="7" height="8" viewBox="0 0 7 8"><path d="M0 0L7 4L0 8Z" fill="#6a6a6a"/></svg>
<svg style="left:28.100000000000023px;top:357.35px;" width="11" height="9" viewBox="0 0 11 9"><path d="M0 0.6Q0 0 0.6 0H3.8L5 1.4H10.4Q11 1.4 11 2V8.4Q11 9 10.4 9H0.6Q0 9 0 8.4Z" fill="#c8c8c8"/></svg>
<div class="t" style="left:42.6px;top:356.55px;font-size:11px;line-height:11px;color:#c4c4c4;">JetBrains Rider Editor</div>
<svg style="left:16.600000000000023px;top:372.02000000000004px;" width="7" height="8" viewBox="0 0 7 8"><path d="M0 0L7 4L0 8Z" fill="#6a6a6a"/></svg>
<svg style="left:28.100000000000023px;top:371.52000000000004px;" width="11" height="9" viewBox="0 0 11 9"><path d="M0 0.6Q0 0 0.6 0H3.8L5 1.4H10.4Q11 1.4 11 2V8.4Q11 9 10.4 9H0.6Q0 9 0 8.4Z" fill="#c8c8c8"/></svg>
<div class="t" style="left:42.6px;top:370.72px;font-size:11px;line-height:11px;color:#c4c4c4;">Mathematics</div>
<svg style="left:16.600000000000023px;top:386.19px;" width="7" height="8" viewBox="0 0 7 8"><path d="M0 0L7 4L0 8Z" fill="#6a6a6a"/></svg>
<svg style="left:28.100000000000023px;top:385.69px;" width="11" height="9" viewBox="0 0 11 9"><path d="M0 0.6Q0 0 0.6 0H3.8L5 1.4H10.4Q11 1.4 11 2V8.4Q11 9 10.4 9H0.6Q0 9 0 8.4Z" fill="#c8c8c8"/></svg>
<div class="t" style="left:42.6px;top:384.89px;font-size:11px;line-height:11px;color:#c4c4c4;">Newtonsoft Json</div>
<svg style="left:16.600000000000023px;top:400.36px;" width="7" height="8" viewBox="0 0 7 8"><path d="M0 0L7 4L0 8Z" fill="#6a6a6a"/></svg>
<svg style="left:28.100000000000023px;top:399.86px;" width="11" height="9" viewBox="0 0 11 9"><path d="M0 0.6Q0 0 0.6 0H3.8L5 1.4H10.4Q11 1.4 11 2V8.4Q11 9 10.4 9H0.6Q0 9 0 8.4Z" fill="#c8c8c8"/></svg>
<div class="t" style="left:42.6px;top:399.06px;font-size:11px;line-height:11px;color:#c4c4c4;">Services Core</div>
<svg style="left:16.600000000000023px;top:414.53000000000003px;" width="7" height="8" viewBox="0 0 7 8"><path d="M0 0L7 4L0 8Z" fill="#6a6a6a"/></svg>
<svg style="left:28.100000000000023px;top:414.03000000000003px;" width="11" height="9" viewBox="0 0 11 9"><path d="M0 0.6Q0 0 0.6 0H3.8L5 1.4H10.4Q11 1.4 11 2V8.4Q11 9 10.4 9H0.6Q0 9 0 8.4Z" fill="#c8c8c8"/></svg>
<div class="t" style="left:42.6px;top:413.23px;font-size:11px;line-height:11px;color:#c4c4c4;">Test Framework</div>
<svg style="left:16.600000000000023px;top:428.70000000000005px;" width="7" height="8" viewBox="0 0 7 8"><path d="M0 0L7 4L0 8Z" fill="#6a6a6a"/></svg>
<svg style="left:28.100000000000023px;top:428.20000000000005px;" width="11" height="9" viewBox="0 0 11 9"><path d="M0 0.6Q0 0 0.6 0H3.8L5 1.4H10.4Q11 1.4 11 2V8.4Q11 9 10.4 9H0.6Q0 9 0 8.4Z" fill="#c8c8c8"/></svg>
<div class="t" style="left:42.6px;top:427.4px;font-size:11px;line-height:11px;color:#c4c4c4;">TextMeshPro</div>
<svg style="left:16.600000000000023px;top:442.87px;" width="7" height="8" viewBox="0 0 7 8"><path d="M0 0L7 4L0 8Z" fill="#6a6a6a"/></svg>
<svg style="left:28.100000000000023px;top:442.37px;" width="11" height="9" viewBox="0 0 11 9"><path d="M0 0.6Q0 0 0.6 0H3.8L5 1.4H10.4Q11 1.4 11 2V8.4Q11 9 10.4 9H0.6Q0 9 0 8.4Z" fill="#c8c8c8"/></svg>
<div class="t" style="left:42.6px;top:441.57px;font-size:11px;line-height:11px;color:#c4c4c4;">Timeline</div>
<svg style="left:16.600000000000023px;top:457.04px;" width="7" height="8" viewBox="0 0 7 8"><path d="M0 0L7 4L0 8Z" fill="#6a6a6a"/></svg>
<svg style="left:28.100000000000023px;top:456.54px;" width="11" height="9" viewBox="0 0 11 9"><path d="M0 0.6Q0 0 0.6 0H3.8L5 1.4H10.4Q11 1.4 11 2V8.4Q11 9 10.4 9H0.6Q0 9 0 8.4Z" fill="#c8c8c8"/></svg>
<div class="t" style="left:42.6px;top:455.74px;font-size:11px;line-height:11px;color:#c4c4c4;">Unity UI</div>
<svg style="left:16.600000000000023px;top:471.21px;" width="7" height="8" viewBox="0 0 7 8"><path d="M0 0L7 4L0 8Z" fill="#6a6a6a"/></svg>
<svg style="left:28.100000000000023px;top:470.71px;" width="11" height="9" viewBox="0 0 11 9"><path d="M0 0.6Q0 0 0.6 0H3.8L5 1.4H10.4Q11 1.4 11 2V8.4Q11 9 10.4 9H0.6Q0 9 0 8.4Z" fill="#c8c8c8"/></svg>
<div class="t" style="left:42.6px;top:469.91px;font-size:11px;line-height:11px;color:#c4c4c4;">Version Control</div>
<svg style="left:16.600000000000023px;top:485.3799999999999px;" width="7" height="8" viewBox="0 0 7 8"><path d="M0 0L7 4L0 8Z" fill="#6a6a6a"/></svg>
<svg style="left:28.100000000000023px;top:484.8799999999999px;" width="11" height="9" viewBox="0 0 11 9"><path d="M0 0.6Q0 0 0.6 0H3.8L5 1.4H10.4Q11 1.4 11 2V8.4Q11 9 10.4 9H0.6Q0 9 0 8.4Z" fill="#c8c8c8"/></svg>
<div class="t" style="left:42.6px;top:484.08px;font-size:11px;line-height:11px;color:#c4c4c4;">Visual Scripting</div>
<svg style="left:16.600000000000023px;top:499.54999999999995px;" width="7" height="8" viewBox="0 0 7 8"><path d="M0 0L7 4L0 8Z" fill="#6a6a6a"/></svg>
<svg style="left:28.100000000000023px;top:499.04999999999995px;" width="11" height="9" viewBox="0 0 11 9"><path d="M0 0.6Q0 0 0.6 0H3.8L5 1.4H10.4Q11 1.4 11 2V8.4Q11 9 10.4 9H0.6Q0 9 0 8.4Z" fill="#c8c8c8"/></svg>
<div class="t" style="left:42.6px;top:498.25px;font-size:11px;line-height:11px;color:#c4c4c4;">Visual Studio Code</div>
<svg style="left:16.600000000000023px;top:513.7199999999999px;" width="7" height="8" viewBox="0 0 7 8"><path d="M0 0L7 4L0 8Z" fill="#6a6a6a"/></svg>
<svg style="left:28.100000000000023px;top:513.2199999999999px;" width="11" height="9" viewBox="0 0 11 9"><path d="M0 0.6Q0 0 0.6 0H3.8L5 1.4H10.4Q11 1.4 11 2V8.4Q11 9 10.4 9H0.6Q0 9 0 8.4Z" fill="#c8c8c8"/></svg>
<div class="t" style="left:42.6px;top:512.42px;font-size:11px;line-height:11px;color:#c4c4c4;">Visual Studio Editor</div>
</div>
<div class="a" style="left:860.2px;top:38.8px;width:158px;height:17px;background:#3b3b3b;"></div>
<div class="a" style="left:860.2px;top:38.8px;width:158px;height:17px;overflow:hidden">
<div class="t" style="left:3.3999999999999773px;top:2.9000000000000057px;font-size:11px;line-height:11px;color:#c4c4c4;">Assets</div>
<svg style="left:41.59999999999991px;top:4.700000000000003px;" width="5.5" height="8" viewBox="0 0 5.5 8"><path d="M0.6 0.5L4.6 4L0.6 7.5" fill="none" stroke="#8a8a8a" stroke-width="1.1"/></svg>
<div class="t" style="left:52.69999999999993px;top:2.9000000000000057px;font-size:11px;line-height:11px;color:#c4c4c4;">TextMesh Pro</div>
<svg style="left:127.39999999999998px;top:4.700000000000003px;" width="5.5" height="8" viewBox="0 0 5.5 8"><path d="M0.6 0.5L4.6 4L0.6 7.5" fill="none" stroke="#8a8a8a" stroke-width="1.1"/></svg>
<div class="t" style="left:137.29999999999995px;top:2.9000000000000057px;font-size:11px;line-height:11px;color:#e0e0e0;font-weight:bold;letter-spacing:-0.6px">Fonts</div>
</div>
<svg style="left:880px;top:69.3px;" width="43" height="50" viewBox="0 0 43 50"><path d="M0 3Q0 0 3 0H32L43 11V47Q43 50 40 50H3Q0 50 0 47Z" fill="#f2f2f2"/><path d="M8.5 19.5H35.3M8.5 26.3H35.3M8.5 33.6H24" stroke="#8c8c8c" stroke-width="3" stroke-linecap="round"/></svg>
<div class="t" style="left:943.3px;top:76.3px;font-size:38.5px;line-height:38.5px;font-weight:bold;color:#f2f2f2;letter-spacing:0.3px">Aa</div>
<svg style="left:990.6px;top:86.3px;" width="13.6" height="13.6" viewBox="0 0 13.6 13.6"><circle cx="6.8" cy="6.8" r="6.8" fill="#c4c4c4"/><path d="M4.1 3.7L9.9 6.9L4.1 10.2Z" fill="#333"/></svg>
<div class="t" style="left:876.8px;top:125.10000000000001px;font-size:9.5px;line-height:9.5px;color:#c4c4c4;">Liberation...</div>
<div class="t" style="left:944px;top:125.10000000000001px;font-size:9.5px;line-height:9.5px;color:#c4c4c4;">Liberation...</div>
<div class="a" style="left:860px;top:650px;width:158px;height:18px;background:#474747;"></div>
<div class="a" style="left:955.3px;top:657.3px;width:48.9px;height:1.5px;background:#6a6a6a;"></div>
<div class="a" style="left:979.1px;top:653.4px;width:9.2px;height:9.2px;border-radius:50%;background:#b4b4b4"></div>
<div class="a" style="left:0px;top:666.7px;width:618px;height:1.3px;background:#2a2a2a;"></div>
</div></body></html>
